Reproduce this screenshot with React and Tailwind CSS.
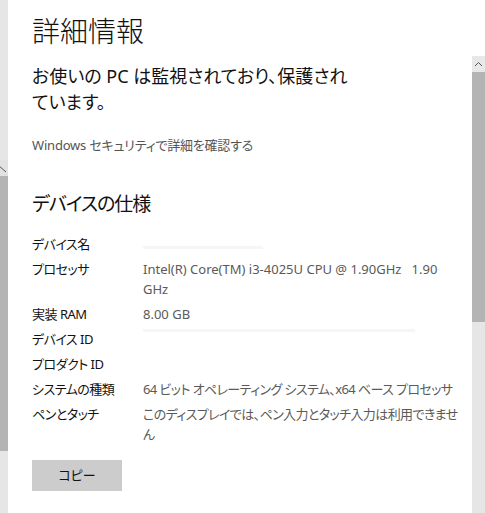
import React from "react";

const specs = [
  { label: "デバイス名", value: null, blur: "w-[120px] mt-[6px]" },
  { label: "プロセッサ", value: ["Intel(R) Core(TM) i3-4025U CPU @ 1.90GHz\u00a0\u00a0\u00a01.90", "GHz"] },
  { label: "実装 RAM", value: ["8.00 GB"] },
  { label: "デバイス ID", value: null, blur: "w-[272px] -mt-[18px]" },
  { label: "プロダクト ID", value: null },
  { label: "システムの種類", value: ["64 ビット オペレーティング システム、x64 ベース プロセッサ"], tight: true },
  { label: "ペンとタッチ", value: ["このディスプレイでは、ペン入力とタッチ入力は利用できませ", "ん"], tight: true },
];

export default function App() {
  return (
    <div
      className="flex w-[485px] h-[513px] overflow-hidden bg-white text-[#1a1a1a] [font-feature-settings:'palt']"
      style={{ fontFamily: '"Noto Sans", "Noto Sans CJK JP", sans-serif' }}
    >
      {/* left edge: scrollbar of window behind */}
      <div className="flex flex-col w-[8px] shrink-0">
        <div className="h-[160px] bg-[#e6e6e6]" />
        <div className="h-[16px] bg-[#e2e2e2] relative overflow-hidden">
          <svg width="8" height="16" className="absolute left-0 top-0">
            <path d="M-2 5 L6 12" stroke="#555" strokeWidth="1" fill="none" />
          </svg>
        </div>
        <div className="h-[275px] bg-[#b4b4b4]" />
        <div className="flex-1 bg-[#e6e6e6]" />
      </div>

      {/* main content */}
      <div className="flex-1 flex flex-col pl-[24px] pt-[13px]">
        <h1 className="text-[28px] leading-[36px] font-light text-[#111]">詳細情報</h1>

        <p className="mt-[14px] text-[18px] leading-[26px] text-[#111] whitespace-nowrap">
          お使いの PC は監視されており、保護され
          <br />
          ています。
        </p>

        <div className="mt-[20px] text-[13px] leading-[20px] text-[#555] tracking-[-0.2px]">
          Windows セキュリティで詳細を確認する
        </div>

        <h2 className="mt-[35px] text-[19px] leading-[28px] tracking-[-1px] text-[#111]">デバイスの仕様</h2>

        <div className="mt-[16px] flex flex-col gap-[5px] text-[13px] leading-[20px]">
          {specs.map((s) => (
            <div key={s.label} className="flex">
              <div className="w-[111px] shrink-0 text-[#111] whitespace-nowrap tracking-[-0.5px]">{s.label}</div>
              <div className={`flex-1 text-[#5a5a5a] ${s.tight ? "tracking-[-0.6px]" : ""}`}>
                {s.value ? (
                  s.value.map((line, i) => (
                    <div key={i} className="whitespace-nowrap">
                      {line}
                    </div>
                  ))
                ) : (
                  <div className="h-[20px] flex items-center">
                    {s.blur && <div className={`${s.blur} h-[3px] bg-[#f6f6f6]`} />}
                  </div>
                )}
              </div>
            </div>
          ))}
        </div>

        <button className="mt-[16px] w-[90px] h-[31px] bg-[#cccccc] text-[13px] text-[#111] flex items-center justify-center">
          コピー
        </button>
      </div>

      {/* right scrollbar */}
      <div className="flex flex-col w-[13px] shrink-0">
        <div className="h-[56px] bg-white" />
        <div className="h-[16px] bg-[#e8e8e8] flex items-center justify-center">
          <svg width="9" height="6" viewBox="0 0 9 6">
            <path d="M1 5 L4.5 1.5 L8 5" stroke="#555" strokeWidth="1" fill="none" />
          </svg>
        </div>
        <div className="h-[250px] bg-[#b4b4b4]" />
        <div className="flex-1 bg-[#e6e6e6]" />
      </div>
    </div>
  );
}
